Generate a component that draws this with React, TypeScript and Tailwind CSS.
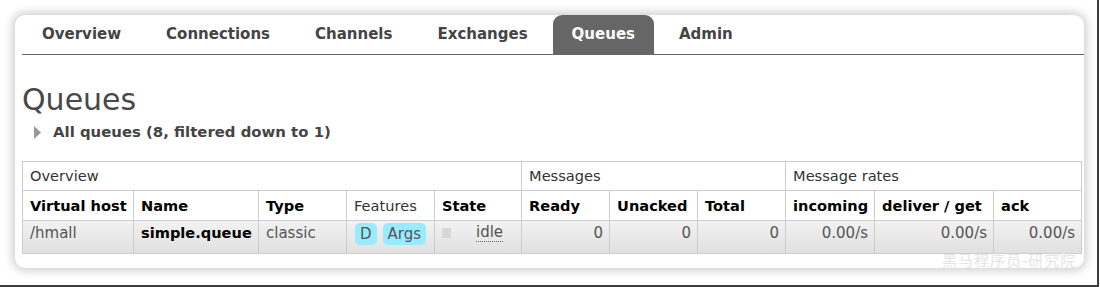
import React from 'react';

const tabs = ['Overview', 'Connections', 'Channels', 'Exchanges', 'Queues', 'Admin'];

export default function App() {
  return (
    <div className="relative w-[1099px] h-[287px] bg-white border-r-2 border-b-2 border-[#3c3c3c] overflow-hidden font-['DejaVu_Sans',Verdana,sans-serif]">
      <div className="absolute left-[15px] top-[15px] w-[1069px] h-[253px] bg-white rounded-[10px] shadow-[0_0_8px_3px_rgba(0,0,0,0.18)]">
        {/* Tabs */}
        <div className="ml-[7px] flex border-b border-[#666] h-[40px]">
          {tabs.map((t) => (
            <div
              key={t}
              className={
                t === 'Queues'
                  ? 'h-[39px] mr-[5px] px-[19px] flex items-center rounded-t-[9px] bg-[#666] text-white text-[15px] font-bold'
                  : 'h-[39px] mr-[5px] px-[20px] flex items-center text-[#444] text-[15px] font-bold'
              }
            >
              {t}
            </div>
          ))}
        </div>

        <div className="pl-[7px] pr-[3px]">
          <h1 className="mt-[25px] text-[30px] leading-[40px] text-[#484848] font-normal">Queues</h1>
          <div className="ml-[12px] flex items-center gap-[12px] h-[24px]">
            <svg width="7" height="13" viewBox="0 0 7 13">
              <polygon points="0,0 7,6.5 0,13" fill="#999" />
            </svg>
            <span className="text-[14.9px] font-bold text-[#444]">All queues (8, filtered down to 1)</span>
          </div>

          <table className="mt-[17px] w-[1059px] border-collapse table-fixed text-[14.6px]">
            <colgroup>
              <col className="w-[111px]" />
              <col className="w-[125px]" />
              <col className="w-[88px]" />
              <col className="w-[88px]" />
              <col className="w-[87px]" />
              <col className="w-[88px]" />
              <col className="w-[88px]" />
              <col className="w-[88px]" />
              <col className="w-[89px]" />
              <col className="w-[119px]" />
              <col className="w-[88px]" />
            </colgroup>
            <thead>
              <tr className="h-[29px] text-[#333]">
                <th colSpan={5} className="border border-[#ccc] px-[7px] text-left font-normal">Overview</th>
                <th colSpan={3} className="border border-[#ccc] px-[7px] text-left font-normal">Messages</th>
                <th colSpan={3} className="border border-[#ccc] px-[7px] text-left font-normal">Message rates</th>
              </tr>
              <tr className="h-[30px] text-black text-[14.6px]">
                <th className="border border-[#ccc] px-[7px] pt-[1px] text-left font-bold whitespace-nowrap">Virtual host</th>
                <th className="border border-[#ccc] px-[7px] pt-[1px] text-left font-bold">Name</th>
                <th className="border border-[#ccc] px-[7px] pt-[1px] text-left font-bold">Type</th>
                <th className="border border-[#ccc] px-[7px] pt-[1px] text-left font-normal text-[#333]">Features</th>
                <th className="border border-[#ccc] px-[7px] pt-[1px] text-left font-bold">State</th>
                <th className="border border-[#ccc] px-[7px] pt-[1px] text-left font-bold">Ready</th>
                <th className="border border-[#ccc] px-[7px] pt-[1px] text-left font-bold">Unacked</th>
                <th className="border border-[#ccc] px-[7px] pt-[1px] text-left font-bold">Total</th>
                <th className="border border-[#ccc] px-[7px] pt-[1px] text-left font-bold">incoming</th>
                <th className="border border-[#ccc] px-[7px] pt-[1px] text-left font-bold whitespace-nowrap">deliver / get</th>
                <th className="border border-[#ccc] px-[7px] pt-[1px] text-left font-bold">ack</th>
              </tr>
            </thead>
            <tbody>
              <tr className="h-[33px] bg-gradient-to-b from-[#f2f2f2] to-[#e0e0e0] text-[#555] text-[15px] align-top">
                <td className="border border-[#ccc] px-[7px] pt-[1px]">/hmall</td>
                <td className="border border-[#ccc] px-[7px] pt-[1px] font-bold text-black text-[14.6px] whitespace-nowrap">simple.queue</td>
                <td className="border border-[#ccc] px-[7px] pt-[1px]">classic</td>
                <td className="border border-[#ccc] px-[7px] pt-[2px]">
                  <div className="flex gap-[6px] pl-[1px]">
                    <span className="rounded-[5px] bg-[#99ebff] px-[5px] h-[22px] leading-[22px]">D</span>
                    <span className="rounded-[5px] bg-[#99ebff] px-[5px] h-[22px] leading-[22px]">Args</span>
                  </div>
                </td>
                <td className="border border-[#ccc] px-[7px] pt-[2px]">
                  <div className="flex items-center">
                    <span className="w-[9px] h-[10px] bg-[#d8d8d8] mt-[1px]" />
                    <span className="ml-[25px] border-b border-dotted border-[#666] leading-[18px]">idle</span>
                  </div>
                </td>
                <td className="border border-[#ccc] px-[6px] pt-[1px] text-right">0</td>
                <td className="border border-[#ccc] px-[6px] pt-[1px] text-right">0</td>
                <td className="border border-[#ccc] px-[6px] pt-[1px] text-right">0</td>
                <td className="border border-[#ccc] px-[6px] pt-[1px] text-right">0.00/s</td>
                <td className="border border-[#ccc] px-[6px] pt-[1px] text-right">0.00/s</td>
                <td className="border border-[#ccc] px-[6px] pt-[1px] text-right">0.00/s</td>
              </tr>
            </tbody>
          </table>
        </div>
      </div>

      {/* watermark */}
      <div className="absolute left-[942px] top-[251px] text-[15px] leading-[18px] tracking-[1px] text-[#e4e4e4] font-['Noto_Sans_CJK_SC',sans-serif]">
        黑马程序员-研究院
      </div>
    </div>
  );
}
